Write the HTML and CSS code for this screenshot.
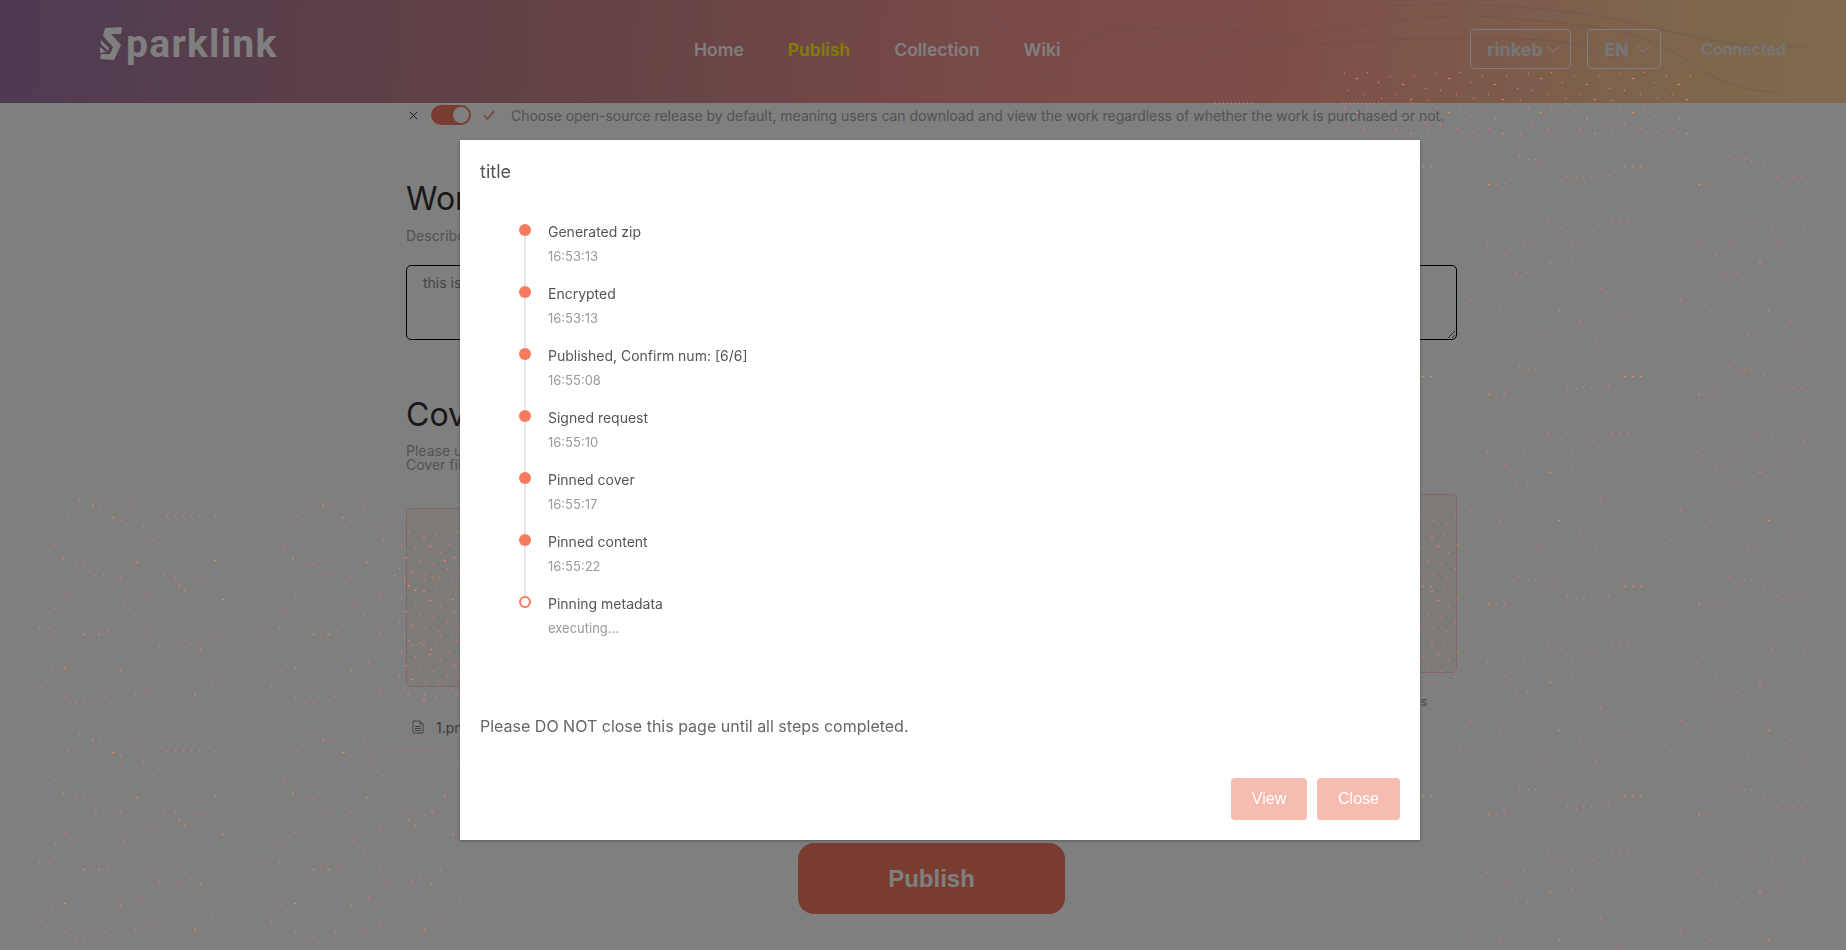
FILE: index.html
```html
<!doctype html>
<html>
<head>
    <meta http-equiv="content-type" content="text/html;charset=utf-8">
    <title>Sparklink - Publish</title>
    <link rel="stylesheet" href="styles.css">
</head>
<body>
    <header class="topbar">
        <svg class="waves" viewBox="0 0 900 103" width="900" height="103">
            <path d="M40 20 C70 20 80 60 100 78 C120 70 130 35 170 30 C220 26 260 30 300 18"/>
            <path d="M180 50 C240 28 300 30 340 34 C420 28 480 10 560 18 C640 24 700 30 740 60 C770 80 790 90 830 92"/>
            <path d="M230 70 C270 48 310 44 350 46 C420 40 500 36 600 40 C650 44 700 70 730 100"/>
            <path d="M440 6 C520 2 620 6 700 26 C760 40 800 50 860 46"/>
        </svg>
        <a class="logo" href="#">
            <svg class="logo-mark" viewBox="0 0 22 33" width="22" height="33">
                <path d="M5 1 L22 0 L21 7 L11 7 L21 18 L14 33 L0 32 L1 27 L10 27 L13 20 L3 9Z"/>
                <path d="M1 13 L9 21 L8 24 L1 17Z"/>
                <path d="M0 20 L6 25 L0 26Z"/>
            </svg>
            <span class="logo-text">parklink</span>
        </a>
        <nav class="nav">
            <a href="#">Home</a>
            <a class="active" href="#">Publish</a>
            <a href="#">Collection</a>
            <a href="#">Wiki</a>
        </nav>
        <div class="account">
            <div class="select select-net">rinkeb
                <svg viewBox="0 0 14 8" width="14" height="8"><path d="M1 1 L7 7 L13 1"/></svg>
            </div>
            <div class="select select-lang">EN
                <svg viewBox="0 0 14 8" width="14" height="8"><path d="M1 1 L7 7 L13 1"/></svg>
            </div>
            <span class="status">Connected</span>
        </div>
    </header>

    <main class="page">
        <div class="license">
            <svg class="license-x" viewBox="0 0 10 10" width="9" height="9"><path d="M1 1 L9 9 M9 1 L1 9"/></svg>
            <span class="toggle"><span class="knob"></span></span>
            <svg class="license-ok" viewBox="0 0 12 10" width="12" height="10"><path d="M1 5 L4.5 9 L11 1"/></svg>
            <span class="license-text">Choose open-source release by default, meaning users can download and view the work regardless of whether the work is purchased or not.</span>
        </div>

        <h2 class="section-title first">Work Description</h2>
        <p class="hint">Describe your work</p>
        <textarea class="desc-input">this is</textarea>

        <h2 class="section-title">Cover</h2>
        <p class="hint cover-hint">Please upload a cover<br>Cover file</p>
        <div class="cover-row">
            <div class="cover-col cover-col-left">
                <div class="cover-box"></div>
                <div class="file-row">
                    <svg viewBox="0 0 12 14" width="12" height="14"><path d="M1 1 H8 L11 4 V13 H1Z M8 1 V4 H11 M3 6.5 H9 M3 8.5 H9 M3 10.5 H9"/></svg>
                    <span>1.png</span>
                </div>
            </div>
            <div class="cover-col">
                <div class="cover-box"></div>
                <p class="cover-note">files</p>
            </div>
        </div>
        <button class="publish">Publish</button>
    </main>

    <div class="mask">
        <svg class="dots" width="1846" height="950">
            <defs>
                <pattern id="sparse" x="0" y="480" width="230" height="235" patternUnits="userSpaceOnUse">
                    <path d="M79 19h1v1h-1z M92 25h2v1h-2z M100 25h1v1h-1z M133 25h1v1h-1z M67 36h1v1h-1z M112 37h2v1h-2z M120 40h1v1h-1z M143 46h1v1h-1z M167 36h1v1h-1z M175 36h1v1h-1z M183 36h1v1h-1z M191 36h1v1h-1z M199 36h1v1h-1z M215 36h1v1h-1z M54 65h1v1h-1z M62 78h2v1h-2z M76 83h1v1h-1z M83 83h1v1h-1z M136 82h2v1h-2z M153 60h1v1h-1z M229 50h1v1h-1z M214 80h2v1h-2z M95 95h1v1h-1z M103 95h1v1h-1z M120 97h1v1h-1z M164 95h1v1h-1z M175 97h1v1h-1z M184 110h2v1h-2z M194 100h1v1h-1z M202 97h1v1h-1z M65 117h1v1h-1z M55 128h1v1h-1z M123 125h1v1h-1z M149 113h1v1h-1z M178 105h2v1h-2z M222 119h2v1h-2z M134 135h1v1h-1z M39 147h1v1h-1z M49 147h1v1h-1z M83 154h2v1h-2z M90 154h1v1h-1z M98 154h2v1h-2z M107 151h1v1h-1z M149 152h1v1h-1z M159 166h1v1h-1z M181 165h1v1h-1z M190 163h1v1h-1z M200 169h2v1h-2z M210 155h1v1h-1z M51 190h1v1h-1z M64 188h2v1h-2z M120 190h2v1h-2z M138 182h1v1h-1z M229 183h1v1h-1z M41 206h1v1h-1z M149 209h1v1h-1z M212 201h1v1h-1z M65 217h1v1h-1z M75 223h1v1h-1z M83 222h1v1h-1z M105 216h1v1h-1z M135 214h1v1h-1z M194 214h2v1h-2z"/>
                </pattern>
                <pattern id="thin" x="1440" y="140" width="210" height="210" patternUnits="userSpaceOnUse">
                    <path d="M79 16h1v1h-1z M88 19h1v1h-1z M95 19h1v1h-1z M101 20h1v1h-1z M114 25h1v1h-1z M127 36h1v1h-1z M136 38h1v1h-1z M143 37h1v1h-1z M151 37h1v1h-1z M168 35h1v1h-1z M184 26h2v1h-2z M192 26h2v1h-2z M200 26h2v1h-2z M48 44h2v1h-2z M56 44h1v1h-1z M64 43h1v1h-1z M107 82h1v1h-1z M121 88h1v1h-1z M131 101h1v1h-1z M153 90h1v1h-1z M172 82h1v1h-1z M180 82h1v1h-1z M188 82h1v1h-1z M47 102h1v1h-1z M83 101h1v1h-1z M131 118h1v1h-1z M65 115h1v1h-1z M109 122h2v1h-2z M75 132h1v1h-1z M87 132h1v1h-1z M160 148h1v1h-1z M30 160h1v1h-1z M60 170h1v1h-1z M118 170h2v1h-2z M140 180h1v1h-1z M178 175h1v1h-1z M20 190h1v1h-1z M98 195h1v1h-1z M155 200h1v1h-1z"/>
                </pattern>
                <pattern id="band" x="1340" y="70" width="92" height="34" patternUnits="userSpaceOnUse">
                    <path d="M4 3h1v1h-1z M16 8h2v1h-2z M27 2h1v1h-1z M38 12h1v1h-1z M50 6h1v1h-1z M62 14h2v1h-2z M74 5h1v1h-1z M85 18h1v1h-1z M8 20h1v1h-1z M24 24h1v1h-1z M41 28h1v1h-1z M56 24h1v1h-1z M70 29h2v1h-2z M88 30h1v1h-1z"/>
                </pattern>
                <pattern id="dense" x="395" y="530" width="48" height="54" patternUnits="userSpaceOnUse">
                    <path d="M13 2h1v1h-1z M28 7h2v1h-2z M40 4h1v1h-1z M6 14h1v1h-1z M20 18h1v1h-1z M34 16h2v1h-2z M45 22h1v1h-1z M10 27h2v1h-2z M25 30h1v1h-1z M38 33h1v1h-1z M4 38h1v1h-1z M16 41h2v1h-2z M30 44h1v1h-1z M43 47h1v1h-1z M9 50h1v1h-1z"/>
                </pattern>
            </defs>
            <rect x="30" y="490" width="432" height="460" fill="url(#sparse)"/>
            <rect x="1420" y="140" width="390" height="810" fill="url(#thin)"/>
            <rect x="1340" y="70" width="360" height="70" fill="url(#band)"/>
            <rect x="395" y="530" width="70" height="175" fill="url(#dense)"/>
            <rect x="1420" y="510" width="40" height="185" fill="url(#dense)"/>
            <line class="dots-row" x1="1342" y1="103" x2="1422" y2="103"/>
            <line class="dots-row" x1="1215" y1="103" x2="1255" y2="103"/>
        </svg>

        <section class="dialog">
            <div class="dialog-title">title</div>
            <ul class="timeline">
                <li class="timeline-item">
                    <span class="node"></span>
                    <div class="step">Generated zip</div>
                    <div class="stamp">16:53:13</div>
                </li>
                <li class="timeline-item">
                    <span class="node"></span>
                    <div class="step">Encrypted</div>
                    <div class="stamp">16:53:13</div>
                </li>
                <li class="timeline-item">
                    <span class="node"></span>
                    <div class="step">Published, Confirm num: [6/6]</div>
                    <div class="stamp">16:55:08</div>
                </li>
                <li class="timeline-item">
                    <span class="node"></span>
                    <div class="step">Signed request</div>
                    <div class="stamp">16:55:10</div>
                </li>
                <li class="timeline-item">
                    <span class="node"></span>
                    <div class="step">Pinned cover</div>
                    <div class="stamp">16:55:17</div>
                </li>
                <li class="timeline-item">
                    <span class="node"></span>
                    <div class="step">Pinned content</div>
                    <div class="stamp">16:55:22</div>
                </li>
                <li class="timeline-item last">
                    <span class="node hollow"></span>
                    <div class="step">Pinning metadata</div>
                    <div class="stamp">executing...</div>
                </li>
            </ul>
            <p class="dialog-note">Please DO NOT close this page until all steps completed.</p>
            <div class="dialog-footer">
                <button class="btn btn-view">View</button>
                <button class="btn btn-close">Close</button>
            </div>
        </section>
    </div>
</body>
</html>
```

FILE: styles.css
```css
* {
    box-sizing: border-box;
}

html, body {
    height: 100%;
}

body {
    margin: 0;
    overflow: hidden;
    font-family: Inter, "Liberation Sans", sans-serif;
    background: #fff;
}

/* top bar */
.topbar {
    position: relative;
    display: flex;
    align-items: center;
    height: 103px;
    padding: 0 0 5px 100px;
    overflow: hidden;
    background: linear-gradient(95deg, #9c76a4 0%, #c58388 28%, #f49493 55%, #fa9c90 70%, #fbc79a 88%, #ffd697 100%);
}

.waves {
    position: absolute;
    top: 0;
    right: 0;
}

.waves path {
    fill: none;
    stroke: #a87fa8;
    stroke-width: 1;
    opacity: .25;
}

.logo {
    position: relative;
    display: flex;
    align-items: flex-start;
    width: 177px;
    height: 46px;
    margin-top: 2px;
    color: #fff;
    text-decoration: none;
}

.logo-mark {
    flex: none;
    fill: #fff;
}

.logo-text {
    margin: -6px 0 0 4px;
    font-family: Roboto, sans-serif;
    font-size: 39px;
    font-weight: 700;
    letter-spacing: 1.3px;
    line-height: 46px;
}

.nav {
    position: relative;
    display: flex;
    gap: 44px;
    margin-left: 417px;
    font-size: 17.5px;
    font-weight: 600;
}

.nav a {
    color: #fff;
    text-decoration: none;
}

.nav a.active {
    color: #ffff00;
}

.account {
    position: relative;
    display: flex;
    align-items: center;
    margin-left: auto;
    padding-right: 60px;
    font-size: 18px;
    font-weight: 700;
    color: #ececec;
}

.select {
    display: flex;
    align-items: center;
    justify-content: space-between;
    height: 40px;
    border: 1px solid #fff;
    border-radius: 5px;
}

.select svg path {
    fill: none;
    stroke: #fff;
    stroke-width: 1;
}

.select-net {
    width: 101px;
    padding: 0 10px 0 16px;
}

.select-lang {
    width: 74px;
    margin-left: 16px;
    padding: 0 10px 0 16px;
}

.status {
    margin-left: 40px;
    font-size: 16px;
    font-weight: 600;
}

/* page under the dialog */
.page {
    width: 1051px;
    margin-left: 406px;
    padding-top: 2px;
    color: #333;
}

.license {
    display: flex;
    align-items: center;
    height: 20px;
}

.license-x {
    margin-left: 3px;
    stroke: #222;
    stroke-width: 1;
}

.toggle {
    display: flex;
    justify-content: flex-end;
    align-items: center;
    width: 40px;
    height: 20px;
    margin-left: 13px;
    padding-right: 2px;
    border-radius: 10px;
    background: #f07a60;
}

.knob {
    width: 16px;
    height: 16px;
    border-radius: 50%;
    background: #fff;
}

.license-ok {
    margin-left: 12px;
    fill: none;
    stroke: #f07a60;
    stroke-width: 1.2;
}

.license-text {
    margin-left: 16px;
    font-size: 14px;
    letter-spacing: -.02px;
    color: #a3a6ad;
    white-space: nowrap;
}

.section-title {
    margin: 56px 0 0;
    font-size: 32px;
    font-weight: 400;
    line-height: 38px;
}

.section-title.first {
    margin-top: 55px;
}

.hint {
    margin: 11px 0 0;
    font-size: 14px;
    line-height: 14px;
    color: #a3a6ad;
}

.desc-input {
    display: block;
    width: 100%;
    height: 75px;
    margin-top: 22px;
    padding: 8px 16px;
    border: 1px solid #000;
    border-radius: 5px;
    outline: none;
    font-family: inherit;
    font-size: 14px;
    color: #888;
    background: transparent;
}

.cover-hint {
    margin-top: 10px;
}

.cover-row {
    display: flex;
    justify-content: space-between;
    align-items: flex-start;
    margin-top: 22px;
}

.cover-col {
    width: 500px;
}

.cover-col-left {
    margin-top: 14px;
}

.cover-box {
    height: 179px;
    border: 1px solid #fad2c8;
    border-radius: 5px;
    background: #fdf6f3;
}

.cover-note {
    margin: 22px 30px 0 0;
    font-size: 12px;
    line-height: 14px;
    text-align: right;
    color: #888;
}

.file-row {
    display: flex;
    align-items: center;
    gap: 12px;
    height: 20px;
    margin-top: 30px;
    padding-left: 6px;
    font-size: 14px;
    color: #777;
}

.file-row svg path {
    fill: none;
    stroke: #888;
    stroke-width: 1;
}

.publish {
    display: block;
    width: 267px;
    height: 71px;
    margin: 106px 0 0 392px;
    border: 0;
    border-radius: 16px;
    font-family: "Liberation Sans", sans-serif;
    font-size: 24px;
    font-weight: 700;
    color: #fff;
    background: #f07a60;
}

/* dialog and its mask */
.mask {
    position: fixed;
    top: 0;
    right: 0;
    bottom: 0;
    left: 0;
    padding: 140px 0 0 460px;
    background: rgba(0, 0, 0, .5);
}

.dots {
    position: absolute;
    top: 0;
    left: 0;
}

.dots path {
    fill: #f47a5c;
    stroke: #f47a5c;
    stroke-width: .2;
}

.dots-row {
    stroke: #f47a5c;
    stroke-width: 1;
    stroke-dasharray: 1 3;
}

.dialog {
    position: relative;
    display: flex;
    flex-direction: column;
    width: 960px;
    height: 700px;
    padding: 20px;
    background: #fff;
    box-shadow: 0 1px 3px rgba(0, 0, 0, .3);
}

.dialog-title {
    font-size: 18px;
    line-height: 24px;
    color: #555;
}

.timeline {
    margin: 40px 0 0;
    padding: 0 0 0 40px;
    list-style: none;
}

.timeline-item {
    position: relative;
    display: flow-root;
    height: 62px;
    padding-left: 28px;
}

.timeline-item::before {
    content: "";
    position: absolute;
    top: 0;
    bottom: 0;
    left: 4px;
    width: 2px;
    background: #e4e7ed;
}

.timeline-item.last::before {
    display: none;
}

.node {
    position: absolute;
    top: 0;
    left: -1px;
    width: 12px;
    height: 12px;
    border-radius: 50%;
    background: #f47a60;
}

.node.hollow {
    border: 2px solid #f47a60;
    background: #fff;
}

.step {
    margin-top: -3px;
    font-size: 14px;
    line-height: 21px;
    color: #555;
}

.stamp {
    margin-top: 8px;
    font-size: 13px;
    line-height: 13px;
    color: #999;
}

.dialog-note {
    margin: 0;
    position: absolute;
    top: 576px;
    left: 20px;
    font-size: 16px;
    line-height: 20px;
    color: #666;
}

.dialog-footer {
    display: flex;
    justify-content: flex-end;
    gap: 10px;
    margin-top: auto;
}

.btn {
    height: 42px;
    border: 0;
    border-radius: 4px;
    font-family: "Liberation Sans", sans-serif;
    font-size: 16px;
    color: #fff;
    background: #f7bcb0;
}

.btn-view {
    width: 76px;
}

.btn-close {
    width: 83px;
}
```
